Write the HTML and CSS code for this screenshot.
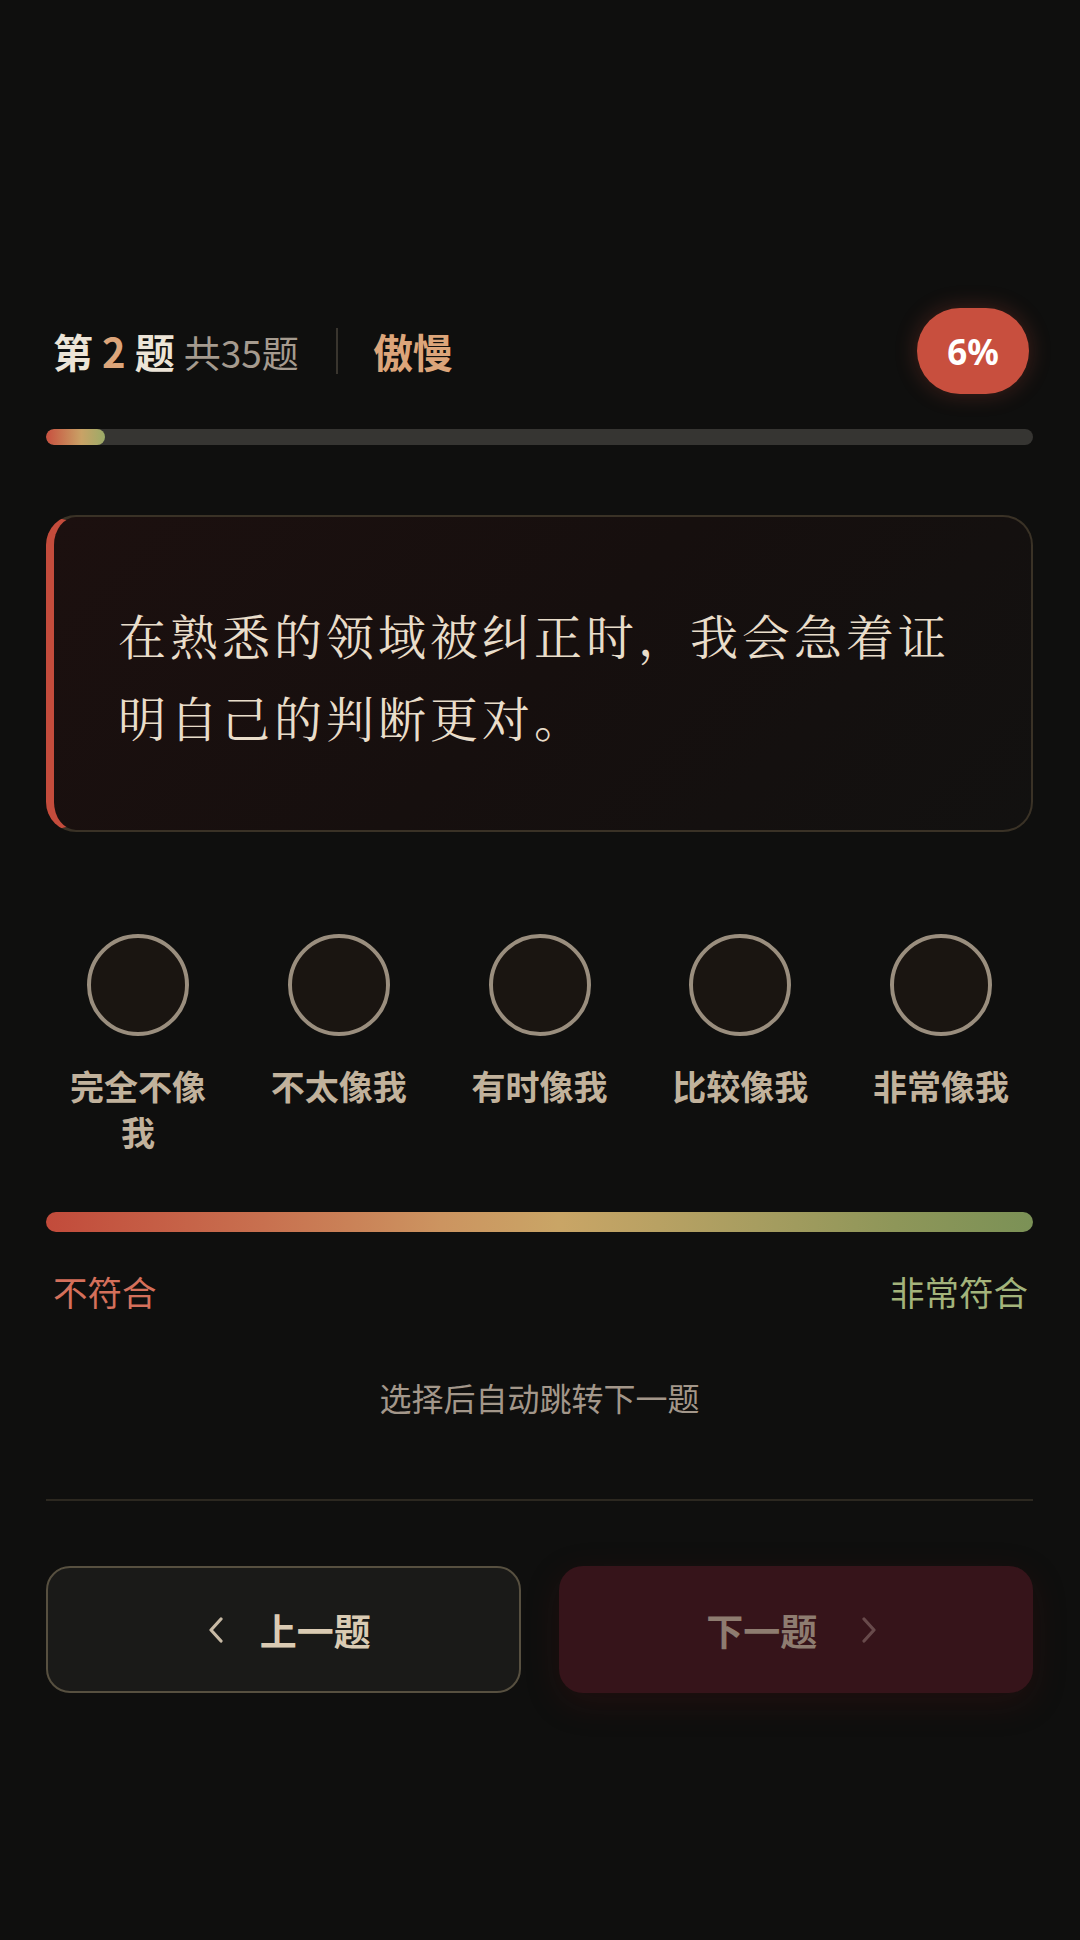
FILE: index.html
```html
<!DOCTYPE html>
<html lang="zh-CN">
<head>
<meta charset="utf-8">
<title>第 2 题</title>
<link rel="stylesheet" href="styles.css">
</head>
<body>
<main class="page">
  <header class="head">
    <div class="count">
      <span class="q">第 <span class="num">2</span> 题</span>
      <span class="total">共35题</span>
    </div>
    <span class="sep"></span>
    <span class="cat">傲慢</span>
    <span class="badge">6%</span>
  </header>

  <div class="progress"><div class="progress-fill" style="width:6%"></div></div>

  <section class="card">
    <p class="question">在熟悉的领域被纠正时，我会急着证明自己的判断更对。</p>
  </section>

  <section class="options">
    <div class="opt"><span class="dot"></span><span class="opt-label">完全不像我</span></div>
    <div class="opt"><span class="dot"></span><span class="opt-label">不太像我</span></div>
    <div class="opt"><span class="dot"></span><span class="opt-label">有时像我</span></div>
    <div class="opt"><span class="dot"></span><span class="opt-label">比较像我</span></div>
    <div class="opt"><span class="dot"></span><span class="opt-label">非常像我</span></div>
  </section>

  <div class="scale"></div>
  <div class="scale-labels">
    <span class="lo">不符合</span>
    <span class="hi">非常符合</span>
  </div>

  <p class="hint">选择后自动跳转下一题</p>

  <hr class="rule">

  <nav class="nav">
    <button class="btn prev">
      <svg class="chev" width="16" height="26" viewBox="0 0 16 26"><path d="M13 2 L3 13 L13 24" fill="none" stroke="currentColor" stroke-width="3.2" stroke-linecap="round" stroke-linejoin="round"/></svg>
      <span>上一题</span>
    </button>
    <button class="btn next">
      <span>下一题</span>
      <svg class="chev" width="16" height="26" viewBox="0 0 16 26"><path d="M3 2 L13 13 L3 24" fill="none" stroke="currentColor" stroke-width="3.2" stroke-linecap="round" stroke-linejoin="round"/></svg>
    </button>
  </nav>
</main>
</body>
</html>
```

FILE: styles.css
```css
* { box-sizing: border-box; }
html, body {
  margin: 0;
  padding: 0;
  background: #0f0f0e;
}
body {
  font-family: "Noto Sans CJK SC", "Noto Sans", sans-serif;
  color: #e9e0d2;
  min-height: 1940px;
}
.page {
  padding: 308px 47px 0 46px;
}

/* header */
.head {
  display: flex;
  align-items: center;
  height: 86px;
}
.count {
  display: flex;
  align-items: baseline;
}
.q {
  font-size: 40px;
  font-weight: 700;
  color: #ece4d7;
  line-height: 1;
  padding-left: 7px;
}
.num { color: #dca57a; }
.total {
  font-size: 37px;
  color: #a59b8f;
  margin-left: 9px;
  line-height: 1;
}
.sep {
  width: 2px;
  height: 46px;
  background: #39352e;
  margin: 0 35px 0 37px;
}
.cat {
  font-size: 40px;
  font-weight: 700;
  color: #dca57a;
  line-height: 1;
}
.badge {
  margin-left: auto;
  margin-right: 4px;
  width: 112px;
  height: 86px;
  border-radius: 43px;
  background: #c84f3e;
  color: #fff;
  font-family: "Noto Sans", sans-serif;
  font-weight: 700;
  font-size: 35px;
  display: flex;
  align-items: center;
  justify-content: center;
  box-shadow: 0 0 22px rgba(200, 80, 60, 0.28);
}

/* progress */
.progress {
  margin-top: 35px;
  height: 16px;
  border-radius: 8px;
  background: #363532;
  overflow: hidden;
}
.progress-fill {
  height: 100%;
  border-radius: 8px;
  background: linear-gradient(90deg, #c8503f 0%, #c9a266 60%, #9bab68 100%);
}

/* question card */
.card {
  margin-top: 70px;
  border: 2px solid #3a3226;
  border-left: 8px solid #c44c3c;
  border-radius: 30px;
  background: linear-gradient(135deg, #1c100f 0%, #160f0e 50%, #121110 100%);
  padding: 77px 56px 72px 64px;
}
.question {
  margin: 0;
  font-family: "Noto Serif CJK SC", "Noto Sans CJK SC", serif;
  font-size: 48px;
  line-height: 82px;
  letter-spacing: 4px;
  color: #e9ddca;
}

/* options */
.options {
  margin-top: 102px;
  display: grid;
  grid-template-columns: repeat(5, 184px);
  justify-content: space-between;
}
.opt {
  display: flex;
  flex-direction: column;
  align-items: center;
}
.dot {
  width: 102px;
  height: 102px;
  border-radius: 50%;
  border: 4px solid #9a8e7e;
  background: #1a1511;
}
.opt-label {
  margin-top: 27px;
  max-width: 150px;
  text-align: center;
  font-size: 34px;
  line-height: 46px;
  font-weight: 700;
  color: #c1b29c;
}

/* scale */
.scale {
  margin-top: 57px;
  height: 20px;
  border-radius: 10px;
  background: linear-gradient(90deg, #c24b3b 0%, #c8704f 22%, #cc9460 40%, #c9a566 52%, #a79d60 72%, #8e9659 86%, #7b9156 100%);
}
.scale-labels {
  margin-top: 36px;
  display: flex;
  justify-content: space-between;
  font-size: 34.5px;
  line-height: 46px;
  padding: 0 5px 0 7px;
}
.lo { color: #d4705b; }
.hi { color: #a3b47b; }

.hint {
  margin: 61px 0 0;
  text-align: center;
  font-size: 32px;
  line-height: 44px;
  color: #a3978a;
}

.rule {
  margin: 80px 0 0;
  border: 0;
  height: 2px;
  background: #2c2820;
}

/* nav buttons */
.nav {
  margin-top: 65px;
  display: grid;
  grid-template-columns: 1fr 1fr;
  gap: 38px;
}
.btn {
  height: 127px;
  border-radius: 24px;
  font-family: "Noto Sans CJK SC", sans-serif;
  font-size: 37px;
  font-weight: 700;
  display: flex;
  align-items: center;
  justify-content: center;
  gap: 36px;
  cursor: pointer;
}
.prev {
  background: #1a1a18;
  border: 2px solid #575040;
  color: #dacbb3;
  padding-left: 18px;
}
.prev .chev { color: #c8baa5; }
.next {
  background: #36141a;
  border: 0;
  color: #8e7c70;
  box-shadow: 0 10px 34px rgba(90, 20, 20, 0.22);
  gap: 44px;
  padding-right: 14px;
}
.next .chev { color: #684a4b; }
```
